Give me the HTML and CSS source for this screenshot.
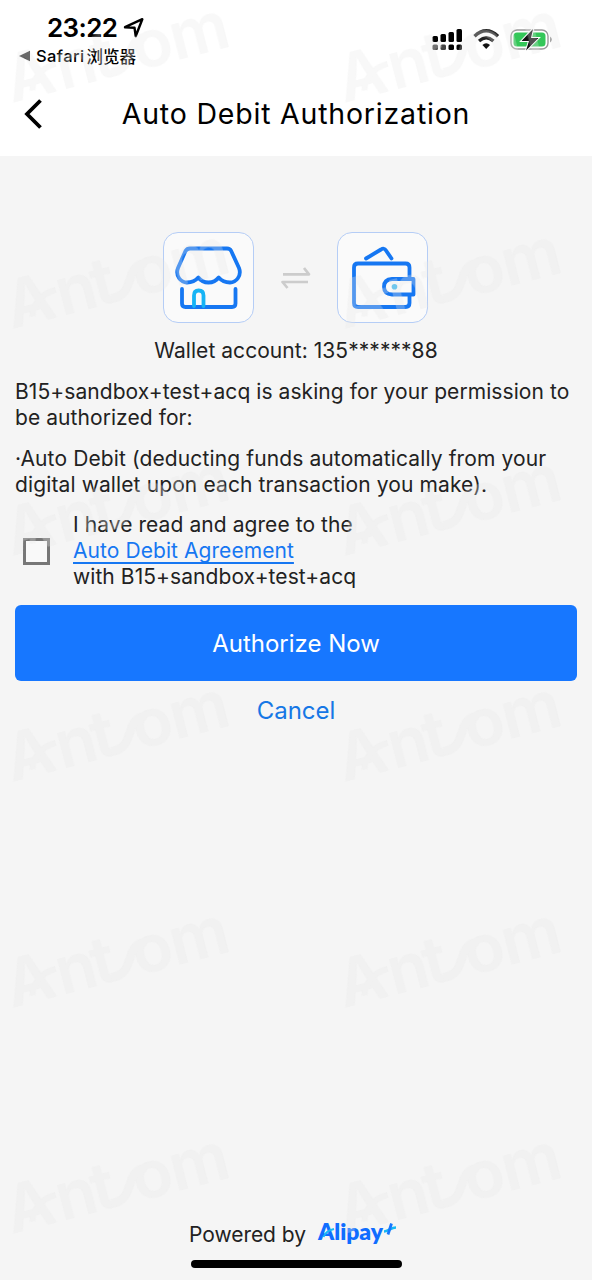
FILE: index.html
```html
<!DOCTYPE html>
<html lang="en">
<head>
<meta charset="utf-8">
<title>Auto Debit Authorization</title>
<link rel="stylesheet" href="styles.css">
</head>
<body>
<div class="screen">
  <header class="top">
    <div class="status">
      <div class="status-left">
        <div class="clock"><span class="time">23:22</span>
          <svg class="locate" width="22" height="22" viewBox="0 0 22 22"><path d="M2 10.2 19.3 2.2 12.7 19.2 11.5 10.7Z" fill="none" stroke="#000" stroke-width="2.4" stroke-linejoin="round"/></svg>
        </div>
        <div class="back-app"><svg width="12" height="12" viewBox="0 0 12 12"><path d="M0 6 11 .8V11.2Z" fill="#333"/></svg><span class="app-name">Safari</span><span class="app-cjk">浏览器</span></div>
      </div>
      <svg class="status-icons" width="122" height="26" viewBox="0 0 122 26">
        <g fill="#000">
          <rect x="0.5" y="9" width="5.500" height="6" rx="1.500"/><rect x="8.500" y="7" width="5.500" height="8" rx="1.500"/><rect x="16.500" y="5" width="5.500" height="10" rx="1.500"/><rect x="24.500" y="2" width="5.500" height="13" rx="1.500"/>
          <rect x="0.5" y="17.500" width="5.500" height="5.500" rx="1.500" fill="#444"/><rect x="8.500" y="17.500" width="5.500" height="5.500" rx="1.500" fill="#444"/><rect x="16.500" y="17.500" width="5.500" height="5.500" rx="1.500"/><rect x="24.500" y="17.500" width="5.500" height="5.500" rx="1.500"/>
        </g>
        <g fill="none" stroke="#222" stroke-width="3.4"><path d="M42.5 9.2Q54.2-1.6 66 9.2"/><path d="M47 14Q54.2 7.6 61.4 14"/></g>
        <path d="M50.4 17.9Q54.2 14.7 58 17.9L54.2 22Z" fill="#111"/>
        <rect x="79" y="3" width="37" height="19" rx="6" fill="#fff" stroke="#999" stroke-width="1.4"/>
        <rect x="81.500" y="5.500" width="32" height="14" rx="3.500" fill="#34c759"/>
        <path d="M118 9.500Q122 12.500 118 15.500Z" fill="#999"/>
        <path d="M101 2 89.500 14H97L94 23.500 106.500 11H99Z" fill="#111" stroke="#fff" stroke-width="2" paint-order="stroke"/>
      </svg>
    </div>
    <div class="nav">
      <svg class="chevron" width="20" height="32" viewBox="0 0 20 32"><path d="M17.500 2.500 4 16 17.500 29.500" fill="none" stroke="#000" stroke-width="3.800"/></svg>
      <h1 class="title">Auto Debit Authorization</h1>
    </div>
  </header>

  <main class="content">
    <div class="link-icons">
      <div class="tile">
        <svg width="89" height="89" viewBox="0 0 89 89" fill="none" stroke="#1677f2" stroke-width="3.800" stroke-linejoin="round" stroke-linecap="round">
          <path d="M26 15.500H63Q66 15.500 67.200 18L75 35C78 43 72 49.500 66 49.500Q59 49.500 54.700 44.500Q51 49.500 44.500 49.500Q38 49.500 34.300 44.500Q30 49.500 23 49.500C17 49.500 11 43 14 35L21.500 18Q23 15.500 26 15.500Z"/>
          <path d="M18 56V70.500Q18 74 21.500 74H68Q71.500 74 71.500 70.500V56"/>
          <path d="M30 73V62.500Q30 57.500 34.700 57.500Q39.500 57.500 39.500 62.500V73" stroke="#16b4f5"/>
        </svg>
      </div>
      <svg class="swap" width="30" height="24" viewBox="0 0 30 24" fill="none" stroke="#ccc" stroke-width="2.700" stroke-linejoin="round"><path d="M2 8.300H28L23 2"/><path d="M27 16H1.500L6.500 22"/></svg>
      <div class="tile">
        <svg width="89" height="89" viewBox="0 0 89 89" fill="none" stroke="#1677f2" stroke-width="3.800" stroke-linejoin="round" stroke-linecap="round">
          <path d="M28 25.500 43 16.500Q46 14.500 48 17.500L53.500 25.500"/>
          <path d="M71.500 46V34.500Q71.500 30.500 67.500 30.500H20Q16 30.500 16 34.500V70Q16 74 20 74H67.500Q71.500 74 71.500 70V62"/>
          <path d="M75.500 46H54Q46 46.500 46 53.700Q46 61 54 61.500H75.500Z"/>
          <circle cx="56.500" cy="53.700" r="2.800" fill="#3fb9ef" stroke="none"/>
        </svg>
      </div>
    </div>
    <p class="account">Wallet account: 135******88</p>
    <p class="text ask">B15+sandbox+test+acq is asking for your permission to<br>be authorized for:</p>
    <p class="text scope">·Auto Debit (deducting funds automatically from your<br>digital wallet upon each transaction you make).</p>
    <div class="agree">
      <span class="checkbox"></span>
      <p class="text">I have read and agree to the<br><a class="link">Auto Debit Agreement</a><br>with B15+sandbox+test+acq</p>
    </div>
    <button class="primary">Authorize Now</button>
    <a class="cancel">Cancel</a>
  </main>

  <footer class="footer">
    <div class="powered"><span>Powered by</span>
      <svg class="brand" width="80" height="28" viewBox="0 0 80 28">
        <text class="brand-text" x="0" y="19.500" textLength="65" lengthAdjust="spacingAndGlyphs">Alipay</text>
        <path d="M5.500 17Q8 10.500 16 9" fill="none" stroke="#16b9f5" stroke-width="2"/>
        <path d="M66 11.500C70 11.500 73 7.500 78 7.500" fill="none" stroke="#16b9f5" stroke-width="2.600"/>
        <path d="M73.500 3.500 70 14.500" fill="none" stroke="#1677ff" stroke-width="2.800"/>
      </svg>
    </div>
    <div class="home-bar"></div>
  </footer>

  <svg class="watermark" width="592" height="1280" viewBox="0 0 592 1280">
    <defs>
      <g id="mark">
        <text class="mark-text" x="0 51.500 88 130 169" y="0">Antom</text>
        <path d="M104-5C121-2 124-17 132-26Q137-31 146-31" fill="none" stroke="#e6e6e6" stroke-width="8.500"/>
        <path d="M52-27C38-27 25-18 23-7" fill="none" stroke="#e6e6e6" stroke-width="6"/>
      </g>
    </defs>
    <g class="mark-layer">
      <use href="#mark" transform="translate(12 103) rotate(-14.500)"/><use href="#mark" transform="translate(344 103) rotate(-14.500)"/>
      <use href="#mark" transform="translate(12 329) rotate(-14.500)"/><use href="#mark" transform="translate(344 329) rotate(-14.500)"/>
      <use href="#mark" transform="translate(12 556) rotate(-14.500)"/><use href="#mark" transform="translate(344 556) rotate(-14.500)"/>
      <use href="#mark" transform="translate(12 782) rotate(-14.500)"/><use href="#mark" transform="translate(344 782) rotate(-14.500)"/>
      <use href="#mark" transform="translate(12 1008) rotate(-14.500)"/><use href="#mark" transform="translate(344 1008) rotate(-14.500)"/>
      <use href="#mark" transform="translate(12 1234) rotate(-14.500)"/><use href="#mark" transform="translate(344 1234) rotate(-14.500)"/>
    </g>
  </svg>
</div>
</body>
</html>
```

FILE: styles.css
```css
* { box-sizing: border-box; }
body { margin: 0; font-family: Inter, "Noto Sans CJK SC", sans-serif; color: #222; }
p, h1 { margin: 0; font-weight: 400; }
svg { display: block; flex: none; overflow: visible; }
.screen { position: relative; width: 592px; height: 1280px; background: #f5f5f5; display: flex; flex-direction: column; overflow: hidden; }
.top { height: 156px; background: #fff; color: #000; flex: none; }
.status { height: 72px; display: flex; justify-content: space-between; padding: 12px 38px 0 19px; }
.clock { display: flex; align-items: center; height: 32px; padding-left: 28px; gap: 6px; }
.time { font-size: 26px; font-weight: 600; letter-spacing: -0.6px; line-height: 32px; }
.back-app { display: flex; align-items: center; height: 24px; font-size: 16.5px; font-weight: 500; }
.app-name { margin-left: 5px; letter-spacing: 0.4px; }
.app-cjk { margin-left: 2px; font-family: "Noto Sans CJK SC", sans-serif; font-size: 16.5px; font-weight: 500; }
.status-icons { margin-top: 15px; }
.nav { display: flex; align-items: center; height: 83px; padding: 0 23px; }
.title { flex: 1; text-align: center; padding-right: 20px; font-size: 28.5px; letter-spacing: 0.8px; }
.content { flex: 1; padding: 76px 15px 0; display: flex; flex-direction: column; }
.link-icons { display: flex; justify-content: center; align-items: center; gap: 26.5px; height: 91px; padding-right: 1px; }
.tile { width: 91px; height: 91px; border: 1px solid #b5cdf6; border-radius: 15px; background: #fafafa; }
.account { text-align: center; margin-top: 15px; font-size: 21px; line-height: 26px; letter-spacing: 0.05px; }
.text { font-size: 21px; line-height: 26px; letter-spacing: 0.07px; white-space: nowrap; }
.ask { margin-top: 15px; }
.scope { margin-top: 15px; letter-spacing: 0.12px; }
.agree { display: flex; align-items: center; gap: 23px; padding-left: 8px; margin-top: 14px; }
.checkbox { width: 27px; height: 27px; border: 3px solid #777; background: #f9f9f9; }
.link { color: #1677f2; text-decoration: underline; text-decoration-thickness: 1.5px; text-underline-offset: 4px; text-decoration-skip-ink: none; }
.primary { margin-top: 15px; height: 76px; flex: none; border: 0; border-radius: 6px; background: #1777ff; color: #fff; font: 400 24px Inter, sans-serif; letter-spacing: 0; }
.cancel { margin-top: 14px; line-height: 32px; text-align: center; font-size: 24px; color: #1677e5; }
.footer { height: 62px; flex: none; display: flex; flex-direction: column; align-items: center; }
.powered { display: flex; align-items: center; height: 32px; gap: 12px; padding-right: 5px; font-size: 21px; letter-spacing: -0.05px; }
.brand-text { font: 800 23px Lato, sans-serif; fill: #0f6dff; letter-spacing: 0; }
.home-bar { width: 211px; height: 8px; margin-top: 10px; border-radius: 4px; background: #000; }
.watermark { position: absolute; left: 0; top: 0; pointer-events: none; }
.mark-layer { opacity: 0.3; }
.mark-text { font: 600 66px Inter, sans-serif; fill: #e6e6e6; }
.primary, .home-bar { position: relative; z-index: 1; }
```
